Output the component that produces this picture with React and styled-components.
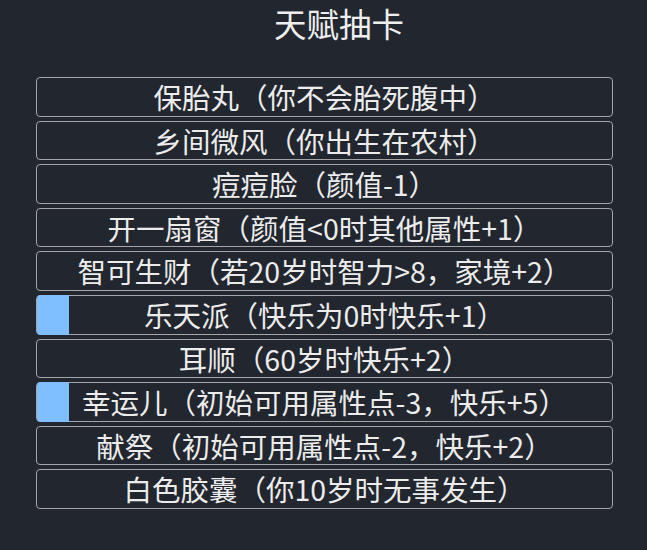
import React from "react"
import styled, { createGlobalStyle } from "styled-components"

const GlobalStyle = createGlobalStyle`
  html, body {
    margin: 0;
    padding: 0;
    background: #22262e;
  }
  body {
    font-family: "Noto Sans CJK SC", "Noto Sans", sans-serif;
    color: #ececec;
  }
`

const Page = styled.div`
  width: 647px;
  height: 550px;
  box-sizing: border-box;
  padding: 0 34px 0 36px;
`

const Title = styled.h1`
  margin: 0;
  padding: 0 0 0 29px;
  height: 46px;
  font-size: 32.5px;
  font-weight: 400;
  line-height: 46px;
  text-align: center;
  color: #eeeeee;
`

const List = styled.ul`
  list-style: none;
  margin: 31px 0 0;
  padding: 0;
  display: flex;
  flex-direction: column;
  gap: 4px;
`

const Card = styled.li`
  position: relative;
  height: 39.6px;
  box-sizing: border-box;
  border: 1px solid #a3a5a9;
  border-radius: 4px;
  display: flex;
  align-items: center;
  justify-content: center;
  padding-top: 1px;
  font-size: 28.5px;
  line-height: 1;
  color: #ececec;
  white-space: nowrap;
`

const Marker = styled.span`
  position: absolute;
  left: 0;
  top: -1px;
  bottom: -1px;
  width: 32px;
  background: #80bfff;
  border-radius: 4px 0 0 4px;
`

const talents = [
  { name: "保胎丸（你不会胎死腹中）" },
  { name: "乡间微风（你出生在农村）" },
  { name: "痘痘脸（颜值-1）" },
  { name: "开一扇窗（颜值<0时其他属性+1）" },
  { name: "智可生财（若20岁时智力>8，家境+2）" },
  { name: "乐天派（快乐为0时快乐+1）", picked: true },
  { name: "耳顺（60岁时快乐+2）" },
  { name: "幸运儿（初始可用属性点-3，快乐+5）", picked: true },
  { name: "献祭（初始可用属性点-2，快乐+2）" },
  { name: "白色胶囊（你10岁时无事发生）" },
]

export default function App() {
  return (
    <Page>
      <GlobalStyle />
      <Title>天赋抽卡</Title>
      <List>
        {talents.map((t, i) => (
          <Card key={i}>
            {t.picked && <Marker />}
            {t.name}
          </Card>
        ))}
      </List>
    </Page>
  )
}
